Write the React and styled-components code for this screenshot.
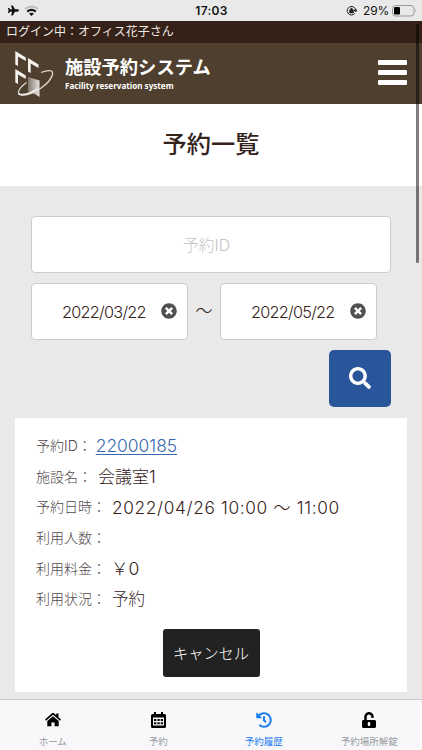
import React from 'react';
import styled, { createGlobalStyle } from 'styled-components';
import {
  FaSearch, FaTimesCircle, FaHistory, FaUnlockAlt, FaPlane,
} from 'react-icons/fa';

const details = [
  { label: '予約ID：', value: '22000185', link: true, gap: 4, size: 17.4 },
  { label: '施設名：', value: '会議室1', gap: 6, size: 17 },
  { label: '予約日時：', value: '2022/04/26 10:00 〜 11:00', gap: 6, size: 17.3, spacing: 0.64 },
  { label: '利用人数：', value: '', gap: 5 },
  { label: '利用料金：', value: '￥0', gap: 5, size: 17.5 },
  { label: '利用状況：', value: '予約', gap: 6, size: 16.5 },
];

function Logo() {
  return (
    <svg width="42" height="48" viewBox="0 0 42 48">
      <defs>
        <linearGradient id="door" x1="0" x2="1">
          <stop offset="0" stopColor="#81776c" />
          <stop offset="1" stopColor="#e6e2dd" />
        </linearGradient>
      </defs>
      <path d="M13 27l11.500 3.500V47l-4-2.500-7.500-3z" fill="url(#door)" />
      <path
        d="M26 22.500C34 19.500 38.500 20 37.500 24.500C35.500 33 19 45 8 45C1 45 2 39.500 11.500 32.500"
        fill="none"
        stroke="#ddd7d0"
        strokeWidth="1.300"
      />
      <path d="M3.500 44q6 2.500 19-5" fill="none" stroke="#f1eeeb" strokeWidth="1.800" />
      <g fill="#f5f2ee">
        <path d="M.3 1l10.500 6.500v3.600L3 6.500V16L.3 14.500z" />
        <path d="M13 8l10.500 6.500v3.600l-7.800-4.600V23L13 21.500z" />
        <path d="M.3 19l10.500 6.500v3.600L3 24.500V34L.3 32.500z" />
      </g>
    </svg>
  );
}

function WifiIcon() {
  return (
    <svg width="15" height="11" viewBox="0 0 15 11">
      <path d="M1 4q6.500-5 13 0" fill="none" stroke="#bbb" strokeWidth="2" />
      <path d="M3.200 6.600q4.300-3.400 8.600 0" fill="none" stroke="#111" strokeWidth="2" />
      <path d="M5 8.500q2.500-1.700 5 0L7.500 11z" fill="#111" />
    </svg>
  );
}

function HomeIcon() {
  return (
    <svg width="16" height="15" viewBox="0 0 16 15">
      <path d="M0 7.500L7 1.200q1-.8 2 0l2.300 2V1.500h2.200v3.700L16 7.500l-1 1.200-7-6-7 6z" />
      <path d="M2.300 9L8 4.200 13.700 9v5.300H9.600v-3.800H6.400v3.800H2.300z" />
    </svg>
  );
}

function CalendarIcon() {
  return (
    <svg width="15" height="16" viewBox="0 0 15 16">
      <path d="M3 0h2v2h5V0h2v2h1.500Q15 2 15 3.500v11q0 1.500-1.500 1.500h-12Q0 16 0 14.500v-11Q0 2 1.500 2H3z" />
      <path d="M2 5.500h11v8H2z" fill="#f8f8fa" />
      <path d="M3 7h2.300v2H3zm3.400 0h2.300v2H6.400zM9.800 7H12v2H9.800zM3 10.200h2.300v2H3zm3.400 0h2.300v2H6.400zm3.400 0H12v2H9.800z" />
    </svg>
  );
}

function DateField({ value }) {
  return (
    <DateBox>
      <DateText>{value}</DateText>
      <FaTimesCircle size={16} color="#505050" />
    </DateBox>
  );
}

function App() {
  return (
    <Screen>
      <GlobalStyle />
      <StatusBar>
        <StatusSide>
          <FaPlane size={11} />
          <WifiIcon />
        </StatusSide>
        <Clock>17:03</Clock>
        <StatusSide $end>
          <svg width="11" height="11" viewBox="0 0 11 11">
            <path d="M8.800 8.500A4.300 4.300 0 1 1 9.800 5.500M8.200 5h2.800L9.600 7z" fill="none" stroke="#222" />
            <path d="M3.500 5h4v3h-4zM4.300 5V4q1.200-1.800 2.400 0v1" fill="#222" stroke="#222" strokeWidth=".5" />
          </svg>
          <Percent>29%</Percent>
          <svg width="25" height="12" viewBox="0 0 25 12">
            <rect x=".5" y=".5" width="21.500" height="10.500" rx="3" fill="none" stroke="#999" />
            <rect x="2" y="2" width="6" height="7.500" rx="1.300" />
            <path d="M23.500 4q1.500 1.700 0 3.500z" fill="#999" />
          </svg>
        </StatusSide>
      </StatusBar>
      <LoginBar>ログイン中：オフィス花子さん</LoginBar>
      <Header>
        <Logo />
        <Brand>
          <BrandName>施設予約システム</BrandName>
          <BrandSub>Facility reservation system</BrandSub>
        </Brand>
        <MenuButton aria-label="menu"><i /><i /><i /></MenuButton>
      </Header>
      <Title>予約一覧</Title>
      <Content>
        <SearchForm>
          <IdField>予約ID</IdField>
          <DateRow>
            <DateField value="2022/03/22" />
            <Tilde>〜</Tilde>
            <DateField value="2022/05/22" />
          </DateRow>
          <SearchButton aria-label="search"><FaSearch size={22} /></SearchButton>
        </SearchForm>
        <Card>
          {details.map((d) => (
            <Detail key={d.label}>
              <Label>{d.label}</Label>
              <Value $gap={d.gap} $link={d.link} $size={d.size} $spacing={d.spacing}>{d.value}</Value>
            </Detail>
          ))}
          <CancelButton>キャンセル</CancelButton>
        </Card>
      </Content>
      <TabBar>
        <Tab><HomeIcon />ホーム</Tab>
        <Tab><CalendarIcon />予約</Tab>
        <Tab $active><FaHistory size={16} />予約履歴</Tab>
        <Tab><FaUnlockAlt size={16} color="#000" />予約場所解錠</Tab>
      </TabBar>
      <ScrollThumb />
    </Screen>
  );
}

//Styled Component
const GlobalStyle = createGlobalStyle`
  * { box-sizing: border-box; }
  body { margin: 0; overflow: hidden; }
  button { border: 0; padding: 0; font: inherit; }
`;

const Screen = styled.div`
  position: relative;
  display: flex;
  flex-direction: column;
  width: 422px;
  height: 750px;
  background: #e9e9e9;
  color: #35231b;
  font-family: Inter, "Noto Sans CJK JP", sans-serif;
  font-weight: 300;
  white-space: nowrap;
`;

const StatusBar = styled.div`
  display: grid;
  grid-template-columns: 1fr auto 1fr;
  align-items: center;
  height: 21px;
  padding: 0 5px 0 8px;
  color: #111;
`;

const StatusSide = styled.div`
  display: flex;
  align-items: center;
  gap: ${(p) => (p.$end ? '3px' : '5px')};
  justify-content: ${(p) => (p.$end ? 'flex-end' : 'flex-start')};
`;

const Clock = styled.div`
  padding-right: 2px;
  font-size: 12px;
  font-weight: 600;
  letter-spacing: 0.3px;
`;

const Percent = styled.span`
  margin-left: 3px;
  font-size: 12px;
  font-weight: 400;
  letter-spacing: -0.2px;
`;

const LoginBar = styled.div`
  height: 22px;
  padding-left: 6px;
  background: #352117;
  color: #f0eae6;
  font-size: 12px;
  font-weight: 400;
  line-height: 21px;
`;

const Header = styled.header`
  display: flex;
  height: 61px;
  padding: 7px 15px 0 15px;
  background: #4f3f2e;
  color: #fff;
`;

const Brand = styled.div`
  display: flex;
  flex-direction: column;
  flex: 1;
  padding: 5px 0 0 8px;
`;

const BrandName = styled.div`
  font-size: 18.300px;
  font-weight: 700;
  line-height: 25px;
`;

const BrandSub = styled.div`
  font-family: "Noto Sans", sans-serif;
  font-size: 8.100px;
  font-weight: 700;
  line-height: 12px;
`;

const MenuButton = styled.button`
  display: flex;
  flex-direction: column;
  gap: 5px;
  width: 29px;
  padding-top: 10px;
  background: none;

  i {
    height: 5px;
    border-radius: 1px;
    background: #fff;
  }
`;

const Title = styled.h1`
  height: 82px;
  margin: 0;
  background: #fff;
  font-size: 24.200px;
  font-weight: 500;
  line-height: 82px;
  text-align: center;
`;

const Content = styled.main`
  flex: 1;
  padding: 30px 15px 0;
`;

const SearchForm = styled.div`
  display: flex;
  flex-direction: column;
  gap: 10px;
  padding: 0 16px;
`;

const Field = styled.div`
  display: flex;
  align-items: center;
  height: 57px;
  border: 1px solid #ccc;
  border-radius: 4px;
  background: #fff;
`;

const IdField = styled(Field)`
  justify-content: center;
  padding-right: 9px;
  color: #c3c3c3;
  font-size: 15.800px;
`;

const DateRow = styled.div`
  display: flex;
`;

const DateBox = styled(Field)`
  width: 157px;
  padding: 0 10px 2px 30px;
  justify-content: space-between;
`;

const DateText = styled.span`
  padding-top: 3px;
  font-size: 16.300px;
  letter-spacing: -0.750px;
`;

const Tilde = styled.span`
  width: 32px;
  font-size: 17px;
  line-height: 57px;
  text-align: center;
`;

const SearchButton = styled.button`
  display: flex;
  align-items: center;
  justify-content: center;
  align-self: flex-end;
  width: 62px;
  height: 57px;
  padding-bottom: 2px;
  border-radius: 5px;
  background: #29569b;
  color: #fff;
`;

const Card = styled.section`
  display: flex;
  flex-direction: column;
  height: 274px;
  margin-top: 11px;
  padding: 12px 21px 0;
  background: #fff;
`;

const Detail = styled.div`
  display: flex;
  align-items: center;
  height: 30.600px;
`;

const Label = styled.span`
  color: #50484a;
  font-size: 14px;
`;

const Value = styled.span`
  margin-left: ${(p) => p.$gap}px;
  color: ${(p) => (p.$link ? '#3769b0' : '#35231b')};
  font-size: ${(p) => p.$size || 16.5}px;
  letter-spacing: ${(p) => p.$spacing || 0}px;
  text-decoration: ${(p) => (p.$link ? 'underline' : 'none')};
  text-underline-offset: 2px;
`;

const CancelButton = styled.button`
  align-self: center;
  width: 97px;
  height: 48px;
  margin-top: 15px;
  padding-bottom: 2px;
  border-radius: 3px;
  background: #222;
  color: #fff;
  font-size: 15.200px;
`;

const TabBar = styled.nav`
  display: grid;
  grid-template-columns: repeat(4, 1fr);
  height: 51px;
  border-top: 1px solid #c9c9cb;
  background: #f8f8fa;
`;

const Tab = styled.div`
  display: flex;
  flex-direction: column;
  align-items: center;
  justify-content: space-between;
  padding: 12px 0 1px;
  color: ${(p) => (p.$active ? '#197df2' : '#96999f')};
  font-size: 9.500px;
  font-weight: 400;
  line-height: 15px;
`;

const ScrollThumb = styled.div`
  position: absolute;
  top: 24px;
  right: 3px;
  width: 3px;
  height: 239px;
  border-radius: 2px;
  background: rgba(0, 0, 0, 0.5);
`;

export default App;
